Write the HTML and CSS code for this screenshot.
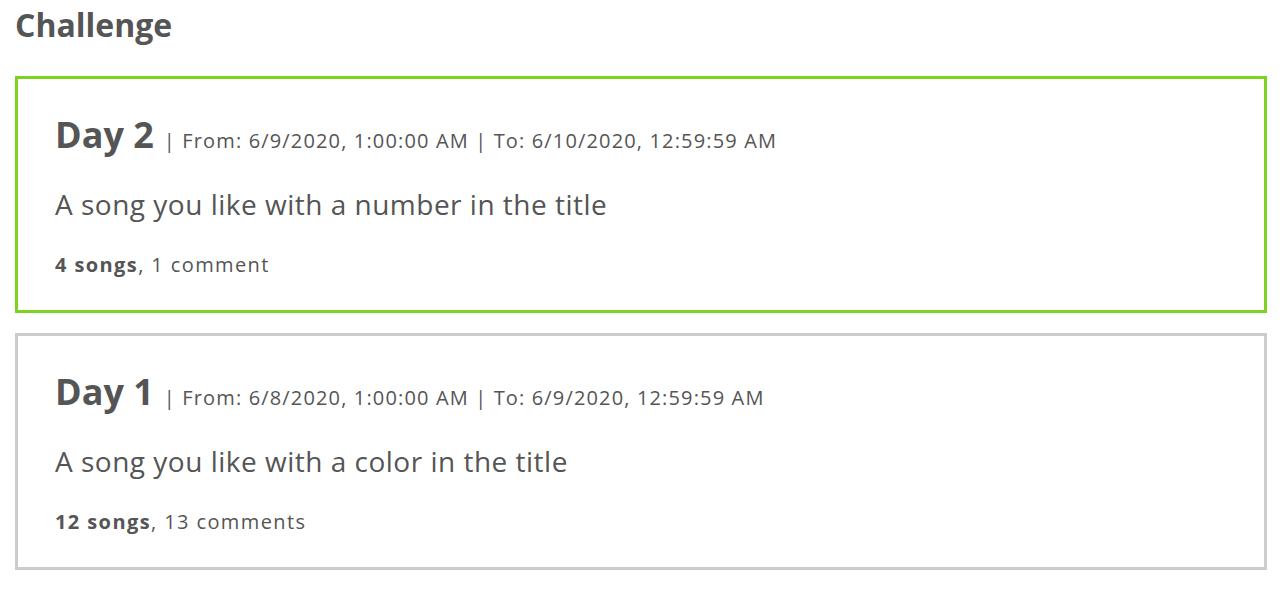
FILE: index.html
```html
<!DOCTYPE html>
<html>
<head>
<meta charset="utf-8">
<link rel="stylesheet" href="styles.css">
</head>
<body>
<main class="page">
  <h1 class="page-title">Challenge</h1>
  <section class="card card-active">
    <div class="card-head"><span class="day">Day 2</span><span class="meta">| From: 6/9/2020, 1:00:00 AM | To: 6/10/2020, 12:59:59 AM</span></div>
    <p class="desc">A song you like with a number in the title</p>
    <p class="count"><b>4 songs</b>, 1 comment</p>
  </section>
  <section class="card">
    <div class="card-head"><span class="day">Day 1</span><span class="meta">| From: 6/8/2020, 1:00:00 AM | To: 6/9/2020, 12:59:59 AM</span></div>
    <p class="desc">A song you like with a color in the title</p>
    <p class="count"><b>12 songs</b>, 13 comments</p>
  </section>
</main>
</body>
</html>
```
FILE: styles.css
```css
html, body {
  margin: 0;
  padding: 0;
  background: #fff;
}
body {
  font-family: "Open Sans", "DejaVu Sans", sans-serif;
  color: #555;
}
.page {
  padding: 6px 13px 0 15px;
  display: flex;
  flex-direction: column;
  gap: 20px;
}
.page-title {
  margin: 0 0 12px 0;
  font-size: 32px;
  line-height: 38px;
  font-weight: 700;
  color: #555;
}
.card {
  border: 3px solid #cccccc;
  padding: 34px 36px 33px 37px;
}
.card-active {
  border-color: #7ed321;
}
.card-head {
  display: flex;
  align-items: baseline;
  height: 44px;
}
.day {
  font-size: 36px;
  line-height: 44px;
  font-weight: 700;
  color: #555;
}
.meta {
  font-size: 20px;
  line-height: 24px;
  letter-spacing: 1.15px;
  margin-left: 10px;
  color: #555;
}
.desc {
  margin: 31px 0 0 0;
  font-size: 28px;
  line-height: 32px;
  letter-spacing: 0.5px;
}
.count {
  margin: 33px 0 0 0;
  font-size: 20px;
  line-height: 24px;
  letter-spacing: 1.4px;
}
.count b {
  font-weight: 700;
}
```
